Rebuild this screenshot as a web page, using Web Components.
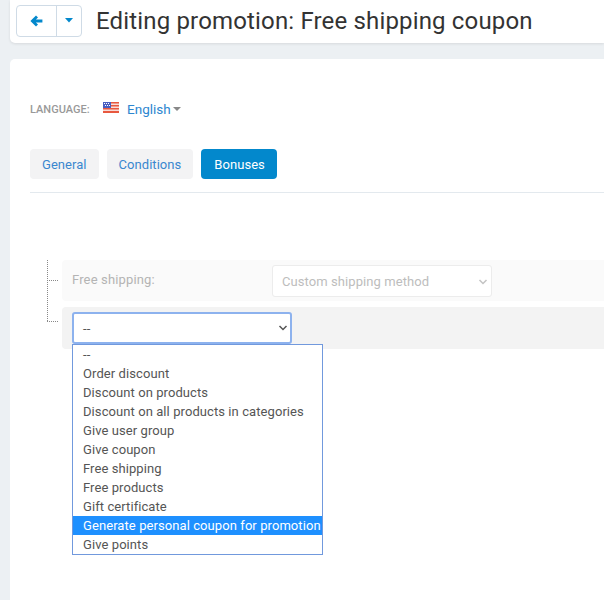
<!DOCTYPE html>
<html lang="en">
<head>
<meta charset="utf-8">
<title>Editing promotion</title>
<style>
	html, body {
		margin: 0;
		height: 600px;
		overflow: hidden;
		background: #ecf0f3;
		font-family: Roboto, "Liberation Sans", sans-serif;
	}
</style>
</head>
<body>
<promo-header title-text="Editing promotion: Free shipping coupon"></promo-header>
<promo-card>
	<lang-picker></lang-picker>
	<tab-bar></tab-bar>
	<bonus-tree>
		<bonus-row disabled label="Free shipping:">
			<fake-select disabled value="Custom shipping method"></fake-select>
		</bonus-row>
		<bonus-row>
			<fake-select open value="--"></fake-select>
		</bonus-row>
	</bonus-tree>
</promo-card>

<script>
const PromoHeaderTemplate = document.createElement('template');
PromoHeaderTemplate.innerHTML = `
	<style>
		:host {
			display: flex;
			align-items: center;
			height: 43px;
			margin-left: 10px;
			padding: 0 0 2px 6px;
			box-sizing: border-box;
			background: #fff;
			border-radius: 0 0 0 5px;
			box-shadow: 0 1px 3px #00000018;
		}
		.group {
			display: flex;
			width: 66px;
			height: 32px;
			box-sizing: border-box;
			border: 1px solid #cfdbe6;
			border-radius: 4px;
			flex: none;
		}
		.group div {
			display: flex;
			align-items: center;
			justify-content: center;
		}
		.back {
			width: 39px;
			border-right: 1px solid #cfdbe6;
		}
		.back svg {
			margin-right: 1px;
		}
		.more {
			flex: 1;
		}
		h1 {
			margin: 0 0 0 14px;
			font-size: 24px;
			font-weight: 400;
			line-height: 32px;
			letter-spacing: 0.16px;
			color: #333;
			white-space: nowrap;
		}
	</style>
	<div class="group">
		<div class="back">
			<svg width="13" height="12" viewBox="0 0 13 12"><path fill="#0388cc" d="M6 0.4 L8 2.4 L5.9 4.4 H12.4 V7.6 H5.9 L8 9.6 L6 11.6 L0.4 6 Z"/></svg>
		</div>
		<div class="more">
			<svg width="8" height="5" viewBox="0 0 8 5"><path fill="#0388cc" d="M0 0 H8 L4 4.5 Z"/></svg>
		</div>
	</div>
	<h1></h1>
`;

class PromoHeader extends HTMLElement {
	constructor() {
		super();
		const shadowRoot = this.attachShadow({mode: 'open'});
		shadowRoot.append(PromoHeaderTemplate.content.cloneNode(true));
		shadowRoot.querySelector('h1').textContent = this.getAttribute('title-text');
	}
}
customElements.define('promo-header', PromoHeader);

const PromoCardTemplate = document.createElement('template');
PromoCardTemplate.innerHTML = `
	<style>
		:host {
			display: block;
			height: 560px;
			margin: 16px 0 0 10px;
			padding: 38px 0 0 20px;
			box-sizing: border-box;
			background: #fff;
			border-radius: 5px 0 0 0;
		}
	</style>
	<slot></slot>
`;

class PromoCard extends HTMLElement {
	constructor() {
		super();
		this.attachShadow({mode: 'open'}).append(PromoCardTemplate.content.cloneNode(true));
	}
}
customElements.define('promo-card', PromoCard);

const LangPickerTemplate = document.createElement('template');
LangPickerTemplate.innerHTML = `
	<style>
		:host {
			display: flex;
			align-items: center;
			height: 24px;
		}
		.label {
			font-size: 11px;
			font-weight: 500;
			color: #999;
			width: 73px;
		}
		svg.flag {
			margin: -4px 8px 0 0;
		}
		.name {
			font-size: 13.5px;
			color: #2d86cf;
			margin-right: 2px;
		}
	</style>
	<span class="label">LANGUAGE:</span>
	<svg class="flag" width="16" height="11" viewBox="0 0 16 11">
		<rect width="16" height="11" fill="#f8dcd8"/>
		<path fill="#e8583f" d="M0 0H16V1.4H0ZM0 3H16V4.4H0ZM0 6H16V7.4H0ZM0 9H16V11H0Z"/>
		<rect width="8" height="6" fill="#4a5fc0"/>
		<path fill="#fff" d="M1 1h1v1H1zM3 1h1v1H3zM5 1h1v1H5zM2 3h1v1H2zM4 3h1v1H4zM6 3h1v1H6z"/>
	</svg>
	<span class="name">English</span>
	<svg width="8" height="4" viewBox="0 0 8 4"><path fill="#888" d="M0 0H8L4 4Z"/></svg>
`;

class LangPicker extends HTMLElement {
	constructor() {
		super();
		this.attachShadow({mode: 'open'}).append(LangPickerTemplate.content.cloneNode(true));
	}
}
customElements.define('lang-picker', LangPicker);

const TabBarTemplate = document.createElement('template');
TabBarTemplate.innerHTML = `
	<style>
		:host {
			display: flex;
			gap: 8px;
			margin-top: 28px;
			padding-bottom: 13px;
			border-bottom: 1px solid #e3e9ee;
		}
		span {
			height: 30px;
			line-height: 31px;
			box-sizing: border-box;
			padding: 0 12px;
			border-radius: 4px;
			font-size: 13px;
			letter-spacing: 0.05px;
			background: #f3f3f4;
			color: #3a87cf;
		}
		span.active {
			padding: 0 12px 0 13px;
			background: #0388cc;
			color: #fff;
		}
	</style>
	<span>General</span>
	<span>Conditions</span>
	<span class="active">Bonuses</span>
`;

class TabBar extends HTMLElement {
	constructor() {
		super();
		this.attachShadow({mode: 'open'}).append(TabBarTemplate.content.cloneNode(true));
	}
}
customElements.define('tab-bar', TabBar);

const BonusTreeTemplate = document.createElement('template');
BonusTreeTemplate.innerHTML = `
	<style>
		:host {
			display: flex;
			flex-direction: column;
			gap: 6px;
			position: relative;
			margin-top: 67px;
			padding-left: 32px;
		}
		.trunk {
			position: absolute;
			left: 17px;
			top: 0;
			height: 61px;
			border-left: 1px dotted #888;
		}
	</style>
	<div class="trunk"></div>
	<slot></slot>
`;

class BonusTree extends HTMLElement {
	constructor() {
		super();
		this.attachShadow({mode: 'open'}).append(BonusTreeTemplate.content.cloneNode(true));
	}
}
customElements.define('bonus-tree', BonusTree);

const BonusRowTemplate = document.createElement('template');
BonusRowTemplate.innerHTML = `
	<style>
		:host {
			display: flex;
			position: relative;
			padding: 5px 0 5px 10px;
			background: #f3f3f3;
			border-radius: 4px 0 0 4px;
		}
		:host([disabled]) {
			background: #fafafa;
			padding-bottom: 4px;
		}
		.branch {
			position: absolute;
			left: -15px;
			top: 14px;
			width: 11px;
			border-top: 1px dotted #888;
		}
		:host([disabled]) .branch {
			top: 20px;
		}
		.label {
			width: 200px;
			padding-top: 5px;
			font-size: 13px;
			line-height: 20px;
			letter-spacing: 0.15px;
			color: #b4b4b4;
		}
		.label:empty {
			display: none;
		}
	</style>
	<div class="branch"></div>
	<div class="label"></div>
	<slot></slot>
`;

class BonusRow extends HTMLElement {
	constructor() {
		super();
		const shadowRoot = this.attachShadow({mode: 'open'});
		shadowRoot.append(BonusRowTemplate.content.cloneNode(true));
		shadowRoot.querySelector('.label').textContent = this.getAttribute('label') || '';
	}
}
customElements.define('bonus-row', BonusRow);

const FakeSelectTemplate = document.createElement('template');
FakeSelectTemplate.innerHTML = `
	<style>
		:host {
			display: block;
			position: relative;
			width: 220px;
			height: 32px;
			font-size: 13px;
			letter-spacing: 0.08px;
			color: #555;
		}
		.box {
			display: flex;
			align-items: center;
			justify-content: space-between;
			height: 100%;
			box-sizing: border-box;
			padding: 1px 2px 0 9px;
			background: #fff;
			border: 1px solid #ececec;
			border-radius: 3px;
		}
		:host([open]) .box {
			border: 2px solid #8db2ee;
			padding: 0 1px 0 9px;
		}
		:host([disabled]) {
			color: #bdbdbd;
		}
		:host([disabled]) svg {
			opacity: 0.35;
		}
		ul {
			display: none;
			position: absolute;
			left: 0;
			top: 32px;
			z-index: 2;
			width: 251px;
			box-sizing: border-box;
			margin: 0;
			padding: 0;
			list-style: none;
			background: #fff;
			border: 1px solid #7199dd;
		}
		:host([open]) ul {
			display: block;
		}
		li {
			height: 19px;
			line-height: 19px;
			padding-left: 10px;
			white-space: nowrap;
		}
		li.hover {
			background: #1e90ff;
			color: #fff;
		}
	</style>
	<div class="box">
		<span class="value"></span>
		<svg width="12" height="12" viewBox="0 0 12 12"><path fill="none" stroke="#555" stroke-width="1.5" d="M2.5 4 L6 7.5 L9.5 4"/></svg>
	</div>
	<ul>
		<li>--</li>
		<li>Order discount</li>
		<li>Discount on products</li>
		<li>Discount on all products in categories</li>
		<li>Give user group</li>
		<li>Give coupon</li>
		<li>Free shipping</li>
		<li>Free products</li>
		<li>Gift certificate</li>
		<li class="hover">Generate personal coupon for promotion</li>
		<li>Give points</li>
	</ul>
`;

class FakeSelect extends HTMLElement {
	constructor() {
		super();
		const shadowRoot = this.attachShadow({mode: 'open'});
		shadowRoot.append(FakeSelectTemplate.content.cloneNode(true));
		shadowRoot.querySelector('.value').textContent = this.getAttribute('value');
	}
}
customElements.define('fake-select', FakeSelect);
</script>
</body>
</html>
